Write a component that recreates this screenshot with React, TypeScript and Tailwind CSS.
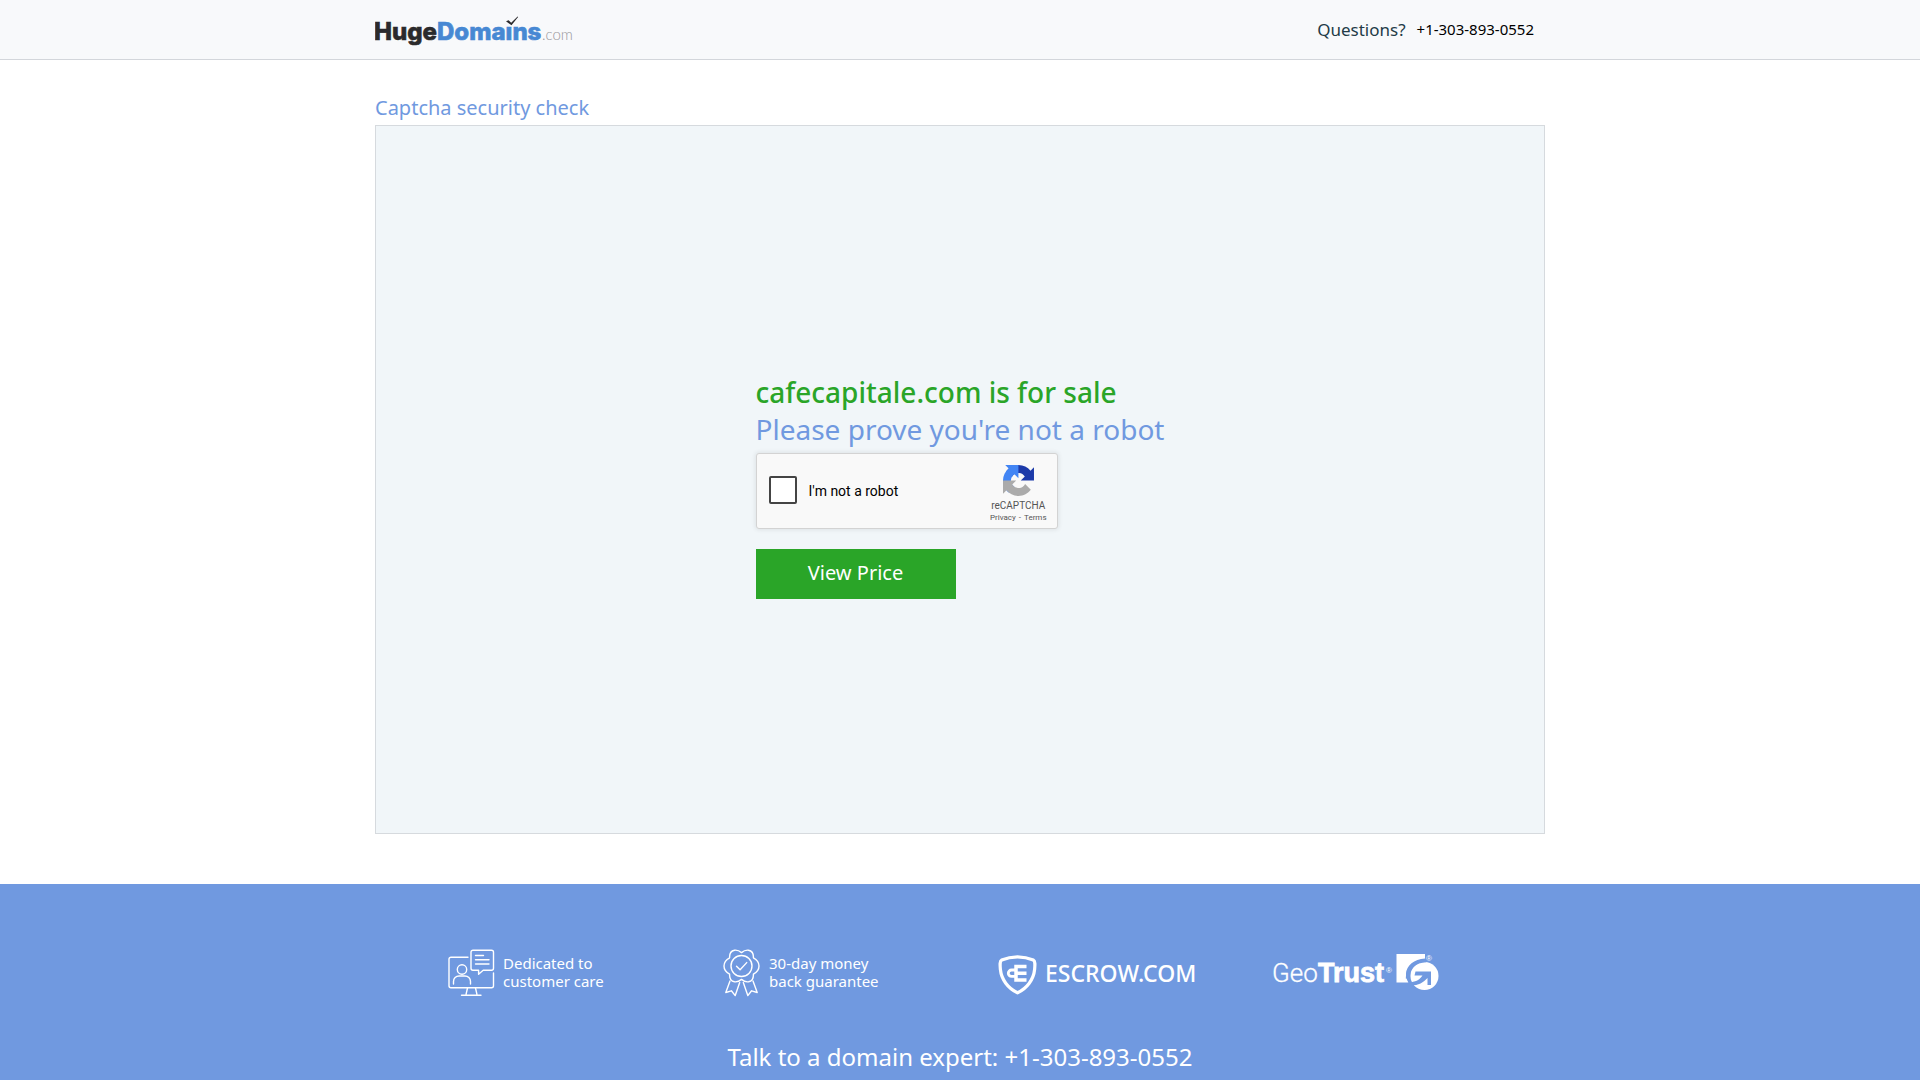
import React from "react";

const PHONE = "+1-303-893-0552";

function HugeDomainsLogo() {
  return (
    <svg className="block h-9 w-[200px]" viewBox="0 0 200 36" role="img" aria-label="HugeDomains.com">
      <g fontFamily="Inter, sans-serif" fontWeight="800" fontSize="24" strokeWidth="0.6">
        <text x="-1" y="28" fill="#2b2a2c" stroke="#2b2a2c">Huge</text>
        <text x="62" y="28" fill="#4788d3" stroke="#4788d3">Domaıns</text>
      </g>
      <text x="167" y="28" fill="#98989b" fontFamily="Lato, sans-serif" fontWeight="300" fontSize="15">.com</text>
      <path d="M131 9.2l2.6-1 2.6 2.6L142.6 4.4l.5.5-6.6 8.4z" fill="#2b2a2c" />
    </svg>
  );
}

function RecaptchaLogo() {
  return (
    <svg className="block size-[31px]" viewBox="0 0 64 64" aria-hidden="true">
      <path d="M64 31.955l-.033-1.37V4.687l-7.16 7.16C50.948 4.674 42.033.093 32.05.093c-10.4 0-19.622 4.96-25.458 12.64l11.736 11.86a15.55 15.55 0 0 1 4.754-5.334c2.05-1.6 4.952-2.906 8.968-2.906.485 0 .86.057 1.135.163 4.976.393 9.288 3.14 11.828 7.124l-8.307 8.307L64 31.953" fill="#1c3aa9" />
      <path d="M31.862.094l-1.37.033H4.594l7.16 7.16C4.58 13.147 0 22.06 0 32.046c0 10.4 4.96 19.622 12.64 25.458L24.5 45.768a15.55 15.55 0 0 1-5.334-4.754c-1.6-2.05-2.906-4.952-2.906-8.968 0-.485.057-.86.163-1.135.393-4.976 3.14-9.288 7.124-11.828l8.307 8.307L31.86.095" fill="#4285f4" />
      <path d="M.001 32.045l.033 1.37v25.898l7.16-7.16c5.86 7.173 14.774 11.754 24.76 11.754 10.4 0 19.622-4.96 25.458-12.64l-11.736-11.86a15.55 15.55 0 0 1-4.754 5.334c-2.05 1.6-4.952 2.906-8.968 2.906-.485 0-.86-.057-1.135-.163-4.976-.393-9.288-3.14-11.828-7.124l8.307-8.307c-10.522.04-22.4.066-27.295-.005" fill="#ababab" />
    </svg>
  );
}

function CustomerCareIcon() {
  return (
    <svg className="h-12 w-[47px] shrink-0" viewBox="0 0 47 48" fill="none" stroke="#fff" strokeWidth="1.4" strokeLinecap="round" strokeLinejoin="round" aria-hidden="true">
      <path d="M20 8.2H3a2 2 0 0 0-2 2v26.6a2 2 0 0 0 2 2h40.5a2 2 0 0 0 2-2V24" />
      <path d="M25 1.2h18.5a2 2 0 0 1 2 2v16a2 2 0 0 1-2 2H35.2l-4.6 4v-4H25a2 2 0 0 1-2-2v-16a2 2 0 0 1 2-2z" />
      <path d="M27.5 6.5h8M27.5 10.8h13.5M27.5 15h13.5" />
      <circle cx="14" cy="20.5" r="4.7" />
      <path d="M5.5 35v-2.5a5.5 5.5 0 0 1 5.5-5.5h6a5.5 5.5 0 0 1 5.5 5.5V35" />
      <path d="M19.5 39l-1.4 6.2M27.5 39l1.4 6.2M13.5 46.2H33" />
    </svg>
  );
}

function GuaranteeIcon() {
  return (
    <svg className="h-12 w-[37px] shrink-0" viewBox="0 0 37 48" fill="none" stroke="#fff" strokeWidth="1.4" strokeLinecap="round" strokeLinejoin="round" aria-hidden="true">
      <path d="M18.5 3.6C20 2.3 22.5 .8 25.5 1.2C29.2 1.8 30.6 5 30.4 8.8C33.5 10.5 36 13 36 17C36 21 33.5 23.5 30.4 25.2C30.6 29 29.2 32.2 25.5 32.8C22.5 33.2 20 31.7 18.5 30.4C17 31.7 14.5 33.2 11.5 32.8C7.8 32.2 6.4 29 6.6 25.2C3.5 23.5 1 21 1 17C1 13 3.5 10.5 6.6 8.8C6.4 5 7.8 1.8 11.5 1.2C14.5 .8 17 2.3 18.5 3.6Z" />
      <circle cx="18.5" cy="17" r="10.5" />
      <path d="M13.5 17.2l3.6 3.6 6.6-7.2" />
      <path d="M7 32L2.8 43.5l5.6-1.7 3.8 4.8 4.5-13M30 32l4.2 11.5-5.6-1.7-3.8 4.8-4.5-13" />
    </svg>
  );
}

function EscrowLogo() {
  return (
    <svg className="h-12 w-[200px]" viewBox="0 0 200 48" role="img" aria-label="ESCROW.COM">
      <path d="M19.5 7.8C24.5 7.9 30.5 9 35.3 11C37.4 12 37 16 36.6 20.5C35.6 30.5 29 39.3 19.5 43.8C10 39.3 3.4 30.5 2.4 20.5C2 16 1.6 12 3.7 11C8.5 9 14.5 7.9 19.5 7.8Z" fill="none" stroke="#fff" strokeWidth="3.2" strokeLinejoin="round" />
      <path d="M28.5 17.400H18v13.600h10.5M28.5 24.200H18" fill="none" stroke="#fff" strokeWidth="3.500" />
      <path d="M18 21h-4.500a3.200 3.200 0 0 0 0 6.400H18" fill="none" stroke="#fff" strokeWidth="2.800" />
      <text x="47" y="33" fill="#fff" fontFamily="Noto Sans, sans-serif" fontWeight="500" fontSize="23">ESCROW.COM</text>
    </svg>
  );
}

function GeoTrustLogo() {
  return (
    <svg className="h-12 w-[168px]" viewBox="0 0 168 48" fill="#fff" role="img" aria-label="GeoTrust">
      <text x="-1" y="33" fontFamily="Roboto, sans-serif" fontWeight="300" fontSize="26" stroke="#fff" strokeWidth="0.3">Geo</text>
      <text x="45" y="33" fontFamily="Liberation Sans, sans-serif" fontWeight="700" fontSize="27" stroke="#fff" strokeWidth="0.8">Trust</text>
      <text x="113" y="24" fontFamily="Liberation Sans, sans-serif" fontSize="8">®</text>
      <text x="153" y="12" fontFamily="Liberation Sans, sans-serif" fontSize="8">®</text>
      <path d="M123.5 5H152v4.6C141 10.5 133.5 16.5 133 25c-.1 3.3 .8 6 2.4 8.500H123.5z" />
      <circle cx="151.5" cy="27" r="14" />
      <path d="M134.5 29.5C134 19 142 12 153 11.6" fill="none" stroke="#7099e0" strokeWidth="3.4" />
      <path d="M142.5 22.5H158V36h-3.500V29c-4 4.500-9 7.500-16.500 7.500l-2.500-3.500c7 .5 11.500-2.500 14-6.500h-8z" fill="#7099e0" />
    </svg>
  );
}

export default function App() {
  return (
    <div className="bg-white font-['Noto_Sans',sans-serif]">
      <header className="border-b border-[#d3d6db] bg-[#f8f9fb]">
        <div className="mx-auto flex h-[59px] max-w-[1170px] items-center justify-between">
          <a href="#"><HugeDomainsLogo /></a>
          <p className="flex items-start gap-[11px] pr-[11px]">
            <span className="text-[17px] leading-6 text-[#233b47]">Questions?</span>
            <a href="tel:+13038930552" className="text-[15px] leading-[22px] text-black">{PHONE}</a>
          </p>
        </div>
      </header>

      <main className="mx-auto max-w-[1170px] pt-[33px] pb-[50px]">
        <h1 className="pb-0.5 text-xl leading-[30px] text-[#7099e0]">Captcha security check</h1>
        <section className="flex justify-center border border-[#d6dade] bg-[#f1f6f9] pt-[247px] pb-[234px]">
          <form onSubmit={(e) => e.preventDefault()}>
            <h2 className="text-[28px] leading-[38px] font-medium text-[#2aa528]">cafecapitale.com is for sale</h2>
            <p className="text-[28px] leading-9 text-[#7099e0]">Please prove you&#39;re not a robot</p>
            <div className="mt-1.5 flex h-[76px] w-[302px] items-center justify-between rounded-[3px] border border-[#d3d3d3] bg-[#f9f9f9] pr-[10px] pl-3 font-[Roboto,sans-serif] shadow-[0_0_4px_1px_rgba(0,0,0,0.08)]">
              <label className="flex items-center gap-3 pb-0.5 text-sm leading-5 text-black">
                <input type="checkbox" className="size-7 appearance-none rounded-[2px] border-2 border-[#444] bg-white checked:bg-[#4285f4]" />
                <span className="pt-0.5">I&#39;m not a robot</span>
              </label>
              <div className="flex flex-col items-center pt-1.5 text-[#555]">
                <RecaptchaLogo />
                <span className="pt-[3px] text-[10px] leading-[14px]">reCAPTCHA</span>
                <span className="flex gap-[3px] text-[8px] leading-[10px]">
                  <a href="#">Privacy</a>
                  <span>-</span>
                  <a href="#">Terms</a>
                </span>
              </div>
            </div>
            <button type="submit" className="mt-5 block h-[50px] w-[200px] bg-[#2aa528] pb-0.5 text-xl text-white">View Price</button>
          </form>
        </section>
      </main>

      <footer className="bg-[#7099e0] pt-[65px] pb-10 text-white">
        <ul className="mx-auto grid max-w-[1170px] grid-cols-4 pl-[70px] text-[15px] leading-[18px]">
          <li className="flex items-center gap-2 pl-[3px]">
            <CustomerCareIcon />
            <span className="pb-0.5">Dedicated to<br />customer care</span>
          </li>
          <li className="flex items-center gap-[9px] pl-[3px]">
            <GuaranteeIcon />
            <span className="pb-0.5">30-day money<br />back guarantee</span>
          </li>
          <li className="flex items-center pl-[3px]"><EscrowLogo /></li>
          <li className="flex items-center pl-[3px]"><GeoTrustLogo /></li>
        </ul>
        <p className="mt-[42px] text-center text-2xl leading-9">
          Talk to a domain expert: <a href="tel:+13038930552">{PHONE}</a>
        </p>
      </footer>
    </div>
  );
}
